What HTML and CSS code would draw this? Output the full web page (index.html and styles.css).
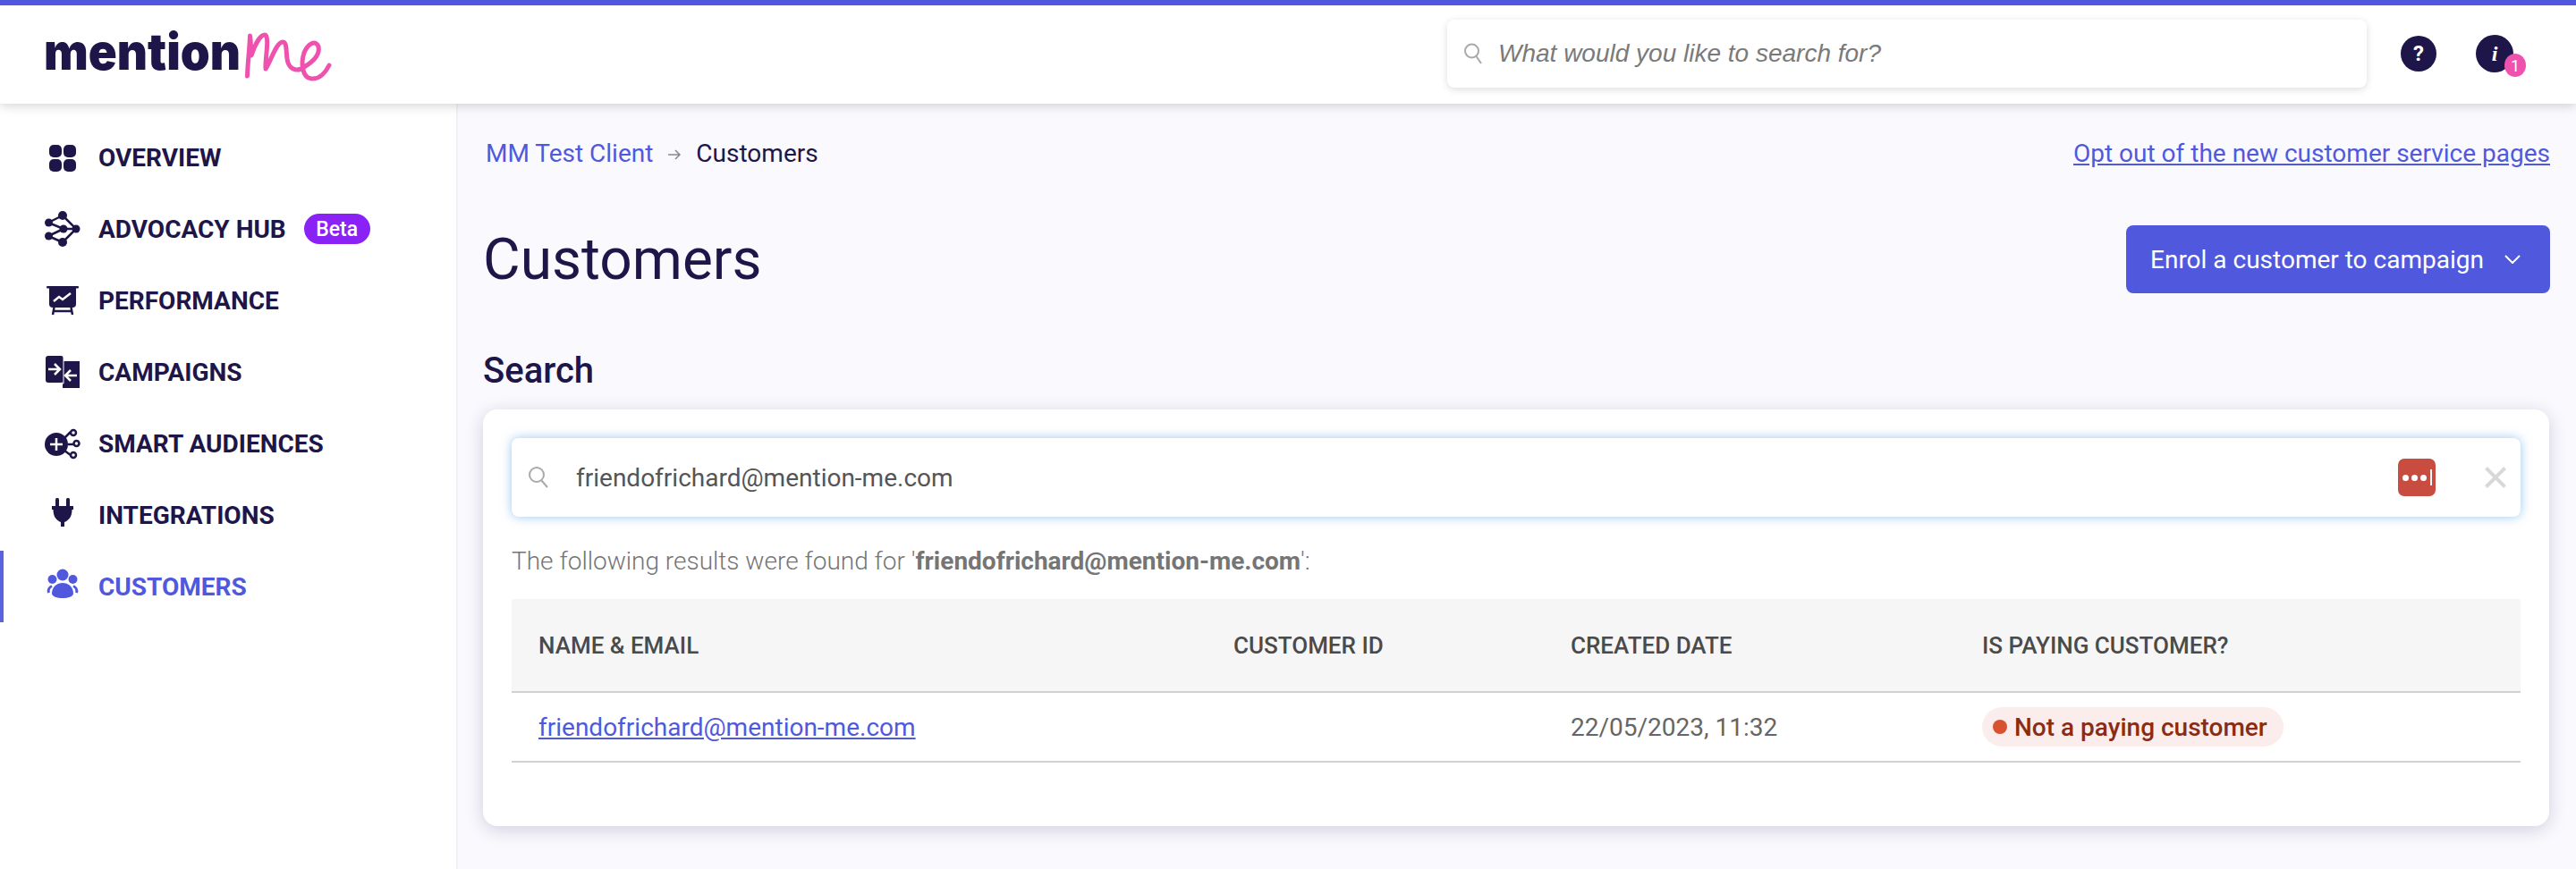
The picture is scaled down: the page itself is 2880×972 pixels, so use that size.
FILE: index.html
```html
<!DOCTYPE html>
<html lang="en">
<head>
<meta charset="utf-8">
<title>Customers</title>
<link rel="stylesheet" href="styles.css">
</head>
<body>
<header class="topbar">
  <svg class="logo" width="400" height="110" viewBox="0 0 400 110" role="img" aria-label="mention me">
    <text class="logo-word" x="49" y="72" textLength="220" lengthAdjust="spacingAndGlyphs">mention</text>
    <path class="logo-script" d="M276.5 79 C277 62 279 50 279.500 34 C281 42 280 52 281 56 C285 44 291 33 296 33 C302 33 296 62 297 71 C303 62 309 41 316 41 C322 41 319 56 322 64 C325 73 334 74 340 69 C350 63 358 55 356 46 C353 38 344 43 340 53 C336 65 338 81 348 82 C357 83 364 75 368 67"/>
  </svg>
  <div class="top-tools">
    <div class="top-search">
      <svg class="search-icon" width="22" height="26" viewBox="0 0 22 26"><circle cx="9.500" cy="10" r="7.500"/><path d="M14.500 16 L20 24"/></svg>
      <span class="top-placeholder">What would you like to search for?</span>
    </div>
    <div class="round-btn help">?</div>
    <div class="round-btn info">i<span class="notif">1</span></div>
  </div>
</header>
<div class="page">
  <nav class="sidebar">
    <a class="nav-item"><span class="nav-icon"><svg width="40" height="40" viewBox="0 0 40 40" class="fill"><rect x="5" y="6" width="14" height="14" rx="5"/><rect x="21" y="6" width="14" height="14" rx="5"/><rect x="5" y="22" width="14" height="14" rx="5"/><rect x="21" y="22" width="14" height="14" rx="5"/></svg></span>OVERVIEW</a>
    <a class="nav-item"><span class="nav-icon"><svg width="40" height="40" viewBox="0 0 40 40" class="fill"><path class="net" d="M20 5 L35 20 L20 35 M4 13 L20 5 M4 13 L21 20 L35 20 M4 28 L21 20 M4 28 L20 35 M21 20 L4 13"/><circle cx="20" cy="5" r="5"/><circle cx="4.500" cy="13" r="4.500"/><circle cx="21" cy="20" r="4.500"/><circle cx="35" cy="20" r="4.500"/><circle cx="4.500" cy="28" r="4.500"/><circle cx="20" cy="35" r="5"/></svg></span>ADVOCACY HUB<span class="beta">Beta</span></a>
    <a class="nav-item"><span class="nav-icon"><svg width="40" height="40" viewBox="0 0 40 40" class="fill"><rect x="2" y="4" width="36" height="2.500" rx="1"/><path d="M5 5 H35 V24 Q35 28 31 28 H9 Q5 28 5 24 Z"/><path class="white-line" d="M10 21 L16 16 L20 19 L29 12"/><path class="net" d="M10.500 28 L9 36 M29.500 28 L31 36 M10 32 H30"/></svg></span>PERFORMANCE</a>
    <a class="nav-item"><span class="nav-icon"><svg width="40" height="40" viewBox="0 0 40 40" class="fill"><path d="M20 8 H39 V38 H20 Z"/><rect x="1" y="2" width="20" height="30" rx="3"/><path class="sep" d="M21 3 V33 H20"/><path class="white-line" d="M4 17 H16 M11 11 L17 17 L11 23 M36 24 H24 M29 18 L23 24 L29 30"/></svg></span>CAMPAIGNS</a>
    <a class="nav-item"><span class="nav-icon"><svg width="40" height="40" viewBox="0 0 40 40" class="fill"><circle cx="13" cy="21" r="13"/><path class="white-line" d="M13 14 V28 M6 21 H20"/><path class="net" d="M22 14 L29 7 M26 21 H32 M22 28 L29 33"/><circle class="ring" cx="32" cy="8" r="3"/><circle class="ring" cx="35.500" cy="20" r="3"/><circle class="ring" cx="32" cy="33" r="3"/></svg></span>SMART AUDIENCES</a>
    <a class="nav-item"><span class="nav-icon"><svg width="40" height="40" viewBox="0 0 40 40" class="fill"><rect x="12" y="1" width="4" height="12" rx="1.500"/><rect x="24" y="1" width="4" height="12" rx="1.500"/><path d="M8 10 H32 V14 H30.500 C30.500 22 27 26 22 28 V33 H18 V28 C13 26 9.500 22 9.500 14 H8 Z"/></svg></span>INTEGRATIONS</a>
    <a class="nav-item active"><span class="nav-icon"><svg width="40" height="40" viewBox="0 0 40 40" class="fill"><circle cx="20" cy="7" r="6.500"/><circle cx="8.500" cy="12" r="5"/><circle cx="31.500" cy="12" r="5"/><path d="M8 28 C8 20 14 16 20 16 C26 16 32 20 32 28 C32 31 26 33 20 33 C14 33 8 31 8 28 Z"/><path class="side" d="M4.500 27 C3.500 24 5 21 8 19.500 M35.500 27 C36.500 24 35 21 32 19.500"/></svg></span>CUSTOMERS</a>
  </nav>
  <main class="content">
    <div class="crumb-row">
      <div class="crumbs">
        <a class="crumb-link">MM Test Client</a>
        <svg class="crumb-arrow" width="14" height="12" viewBox="0 0 14 12"><path d="M0 6 H13 M8 1 L13 6 L8 11"/></svg>
        <span>Customers</span>
      </div>
      <a class="opt-out">Opt out of the new customer service pages</a>
    </div>
    <div class="title-row">
      <h1>Customers</h1>
      <button class="enrol">Enrol a customer to campaign
        <svg width="18" height="10" viewBox="0 0 18 10"><path d="M1 1 L9 9 L17 1"/></svg>
      </button>
    </div>
    <h2>Search</h2>
    <section class="card">
      <div class="search-field">
        <svg class="search-icon" width="24" height="26" viewBox="0 0 24 26"><circle cx="10" cy="10" r="8"/><path d="M15.500 16.500 L22 24"/></svg>
        <span class="search-value">friendofrichard@mention-me.com</span>
        <span class="lastpass"><i></i><i></i><i></i><b></b></span>
        <svg class="clear" width="24" height="24" viewBox="0 0 24 24"><path d="M1.500 1.500 L22.500 22.500 M22.500 1.500 L1.500 22.500"/></svg>
      </div>
      <p class="results-note">The following results were found for '<strong>friendofrichard@mention-me.com</strong>':</p>
      <table class="results">
        <thead>
          <tr>
            <th class="col-name">NAME &amp; EMAIL</th>
            <th class="col-id">CUSTOMER ID</th>
            <th class="col-date">CREATED DATE</th>
            <th class="col-pay">IS PAYING CUSTOMER?</th>
          </tr>
        </thead>
        <tbody>
          <tr>
            <td><a class="email">friendofrichard@mention-me.com</a></td>
            <td></td>
            <td>22/05/2023, 11:32</td>
            <td><span class="status"><i class="dot"></i>Not a paying customer</span></td>
          </tr>
        </tbody>
      </table>
    </section>
  </main>
</div>
</body>
</html>
```
FILE: styles.css
```css
* { box-sizing: border-box; }
html, body { margin: 0; height: 100%; }
body {
  font-family: Roboto, "Liberation Sans", sans-serif;
  color: #1e1648;
  background: #f9f9fe;
  overflow: hidden;
  font-size: 28px;
}
.topbar {
  position: relative;
  z-index: 2;
  height: 116px;
  border-top: 6px solid #5059dd;
  background: #fff;
  box-shadow: 0 2px 12px rgba(0, 0, 0, .18);
  display: flex;
  align-items: flex-start;
  justify-content: space-between;
}
.logo { display: block; }
.logo-word {
  font-family: Inter, sans-serif;
  font-weight: 900;
  font-size: 56px;
  fill: #1e1648;
}
.logo-script {
  fill: none;
  stroke: #ee51ae;
  stroke-width: 5;
  stroke-linecap: round;
  stroke-linejoin: round;
}
.top-tools {
  display: flex;
  align-items: center;
  margin-top: 16px;
  padding-right: 70px;
}
.top-search {
  width: 1028px;
  height: 76px;
  border-radius: 8px;
  background: #fff;
  box-shadow: 0 2px 8px rgba(0, 0, 0, .14);
  display: flex;
  align-items: center;
  padding-left: 18px;
  margin-right: 38px;
}
.search-icon { fill: none; stroke: #aaa; stroke-width: 2; flex: none; }
.top-placeholder {
  font-family: "Liberation Sans", sans-serif;
  font-style: italic;
  font-size: 28px;
  color: #7a7a7a;
  margin-left: 17px;
}
.round-btn {
  position: relative;
  width: 40px;
  height: 40px;
  border-radius: 50%;
  background: #1e1648;
  color: #fff;
  font-weight: 700;
  font-size: 24px;
  display: flex;
  align-items: center;
  justify-content: center;
}
.help { margin-right: 44px; }
.info { width: 42px; height: 42px; font-family: "Liberation Serif", serif; font-style: italic; }
.notif {
  position: absolute;
  left: 32px;
  top: 21px;
  width: 24px;
  height: 26px;
  border-radius: 50%;
  background: #ee51ae;
  color: #fff;
  font-family: Roboto, sans-serif;
  font-style: normal;
  font-weight: 400;
  font-size: 18px;
  display: flex;
  align-items: center;
  justify-content: center;
}
.page { display: flex; height: 856px; }
.sidebar {
  width: 512px;
  flex: none;
  background: #fff;
  border-right: 2px solid #f0f0f6;
  padding-top: 20px;
}
.nav-item {
  display: flex;
  align-items: center;
  height: 80px;
  padding-left: 50px;
  font-weight: 700;
  font-size: 28px;
  color: #1e1648;
}
.nav-item.active {
  color: #5059dd;
  border-left: 4px solid #5c63e0;
  padding-left: 46px;
}
.nav-icon { width: 40px; height: 40px; margin-right: 20px; flex: none; }
.nav-icon svg { display: block; }
.fill { fill: #1e1648; }
.active .fill { fill: #5059dd; }
.net { fill: none; stroke: #1e1648; stroke-width: 2.500; }
.white-line { fill: none; stroke: #fff; stroke-width: 2.500; }
.sep { fill: none; stroke: #fff; stroke-width: 1; }
.ring { fill: #fff; stroke: #1e1648; stroke-width: 2.500; }
.side { fill: none; stroke: #5059dd; stroke-width: 3; }
.beta {
  margin-left: 20px;
  width: 74px;
  height: 34px;
  border-radius: 17px;
  background: #8a22f5;
  color: #fff;
  font-weight: 500;
  font-size: 23px;
  display: flex;
  align-items: center;
  justify-content: center;
}
.content { flex: 1; min-width: 0; padding: 39px 29px 0 28px; }
.crumb-row { display: flex; justify-content: space-between; align-items: center; height: 32px; }
.crumbs { display: flex; align-items: center; padding-left: 3px; }
.crumb-link { color: #5059dd; }
.crumb-arrow { fill: none; stroke: #888; stroke-width: 1.500; margin: 4px 17px 0 17px; }
.opt-out { color: #5059dd; text-decoration: underline; }
.title-row { display: flex; justify-content: space-between; align-items: center; height: 76px; margin-top: 65px; }
h1 { margin: 0; font-size: 64px; font-weight: 400; }
.enrol {
  width: 474px;
  height: 76px;
  border: 0;
  border-radius: 8px;
  background: #5059dd;
  color: #fff;
  font: 400 28px Roboto, sans-serif;
  display: flex;
  align-items: center;
  justify-content: space-between;
  padding: 0 33px 0 27px;
}
.enrol svg { fill: none; stroke: #fff; stroke-width: 2; }
h2 { margin: 63px 0 19px; font-size: 40px; line-height: 48px; font-weight: 500; }
.card {
  width: 2310px;
  height: 466px;
  padding: 32px;
  background: #fff;
  border-radius: 16px;
  box-shadow: 0 4px 20px rgba(30, 22, 72, .18);
}
.search-field {
  height: 88px;
  border-radius: 8px;
  background: #fff;
  box-shadow: 0 0 12px rgba(70, 150, 235, .55);
  display: flex;
  align-items: center;
  padding-left: 18px;
}
.search-value { margin-left: 30px; color: #555; flex: 1; }
.lastpass {
  width: 42px;
  height: 42px;
  border-radius: 7px;
  background: #c84c40;
  display: flex;
  align-items: center;
  gap: 3px;
  padding-left: 5px;
}
.lastpass i { width: 7px; height: 7px; border-radius: 50%; background: #fff; }
.lastpass b { width: 2px; height: 18px; background: #fff; margin-left: 1px; }
.clear { fill: none; stroke: #d8d8d8; stroke-width: 4; margin: 0 16px 0 55px; }
.results-note { margin: 0; height: 92px; padding-top: 34px; line-height: 32px; color: #757575; font-weight: 300; }
.results-note strong { font-weight: 700; }
.results { width: 100%; table-layout: fixed; border-collapse: collapse; }
.col-name { width: 777px; }
.col-id { width: 377px; }
.col-date { width: 460px; }
th {
  height: 104px;
  padding: 0 0 0 30px;
  background: #f6f6f6;
  border-bottom: 2px solid #d2d2d2;
  text-align: left;
  font-size: 26px;
  font-weight: 500;
  color: #4a4a4a;
}
td {
  height: 78px;
  padding: 0 0 0 30px;
  border-bottom: 2px solid #d2d2d2;
  color: #666;
  font-weight: 400;
}
.email { color: #5059dd; text-decoration: underline; }
.status {
  display: inline-flex;
  align-items: center;
  height: 44px;
  padding: 0 18px 0 12px;
  border-radius: 22px;
  background: #fbedeb;
  color: #8a2c14;
  font-weight: 500;
}
.dot { width: 16px; height: 16px; border-radius: 50%; background: #d95130; margin-right: 8px; }
```
